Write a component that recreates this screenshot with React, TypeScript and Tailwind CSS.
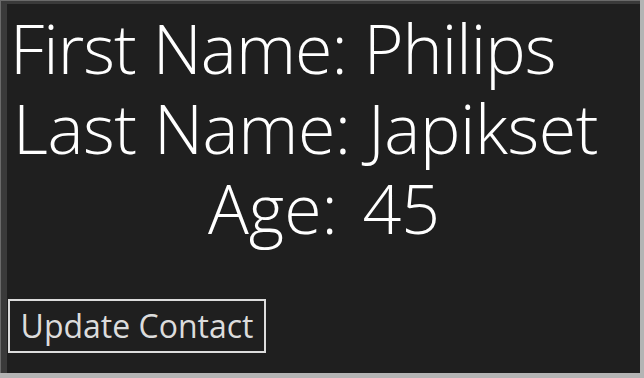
const lines = [
  { text: "First Name: Philips", style: "pl-[3px] tracking-[-0.9px]" },
  { text: "Last Name: Japikset", style: "pl-[6px] tracking-[-0.4px]" },
  { text: "Age: 45", style: "pl-[201px] [word-spacing:7px]" },
];

const App = () => {
  return (
    <div className="flex h-[378px] w-[644px] bg-[#b4b4b4] pb-[5px] pr-[4px]">
      <div className="flex flex-1 border-l border-t border-[#6a6a6a]">
        <div className="flex flex-1 flex-col border-l-[6px] border-t-[3px] border-[#3a3a3a] bg-[#1f1f1f] font-['Open_Sans',sans-serif] text-white">
          <div className="flex flex-col pt-[4px]">
            {lines.map((line) => (
              <p
                key={line.text}
                className={`h-[80px] whitespace-nowrap text-[68px] font-light leading-[80px] ${line.style}`}
              >
                {line.text}
              </p>
            ))}
          </div>
          <button className="ml-[1px] mt-[51px] flex h-[54px] w-[258px] items-center justify-center border-2 border-[#dcdcdc] text-[32px] text-[#dcdcdc]">
            Update Contact
          </button>
        </div>
      </div>
    </div>
  );
};

export default App;
